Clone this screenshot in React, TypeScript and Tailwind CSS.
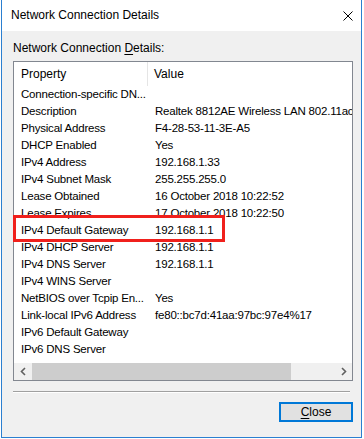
const rows: [string, string][] = [
  ["Connection-specific DN...", ""],
  ["Description", "Realtek 8812AE Wireless LAN 802.11ac"],
  ["Physical Address", "F4-28-53-11-3E-A5"],
  ["DHCP Enabled", "Yes"],
  ["IPv4 Address", "192.168.1.33"],
  ["IPv4 Subnet Mask", "255.255.255.0"],
  ["Lease Obtained", "16 October 2018 10:22:52"],
  ["Lease Expires", "17 October 2018 10:22:50"],
  ["IPv4 Default Gateway", "192.168.1.1"],
  ["IPv4 DHCP Server", "192.168.1.1"],
  ["IPv4 DNS Server", "192.168.1.1"],
  ["IPv4 WINS Server", ""],
  ["NetBIOS over Tcpip En...", "Yes"],
  ["Link-local IPv6 Address", "fe80::bc7d:41aa:97bc:97e4%17"],
  ["IPv6 Default Gateway", ""],
  ["IPv6 DNS Server", ""],
];

const Chevron = ({ dir }: { dir: "left" | "right" }) => (
  <svg width="6" height="9" viewBox="0 0 6 9">
    <polyline
      points={dir === "left" ? "5,1 1.5,4.5 5,8" : "1,1 4.5,4.5 1,8"}
      fill="none"
      stroke="#606060"
      strokeWidth="1.6"
    />
  </svg>
);

export default function App() {
  return (
    <div className="relative w-[364px] h-[439px] bg-white overflow-hidden font-['Liberation_Sans',Arial,sans-serif] text-[12px] text-black">
      <div className="ml-[1px] w-[361px] h-[438px] border-x border-b border-[#2b7fd0] flex flex-col">
        {/* title bar */}
        <div className="h-[31px] bg-white flex items-center justify-between pl-[9px] pr-[8px] shrink-0">
          <span className="leading-[15px]">Network Connection Details</span>
          <svg width="10" height="10" viewBox="0 0 10 10">
            <path d="M0.5 0.5 L9.5 9.5 M9.5 0.5 L0.5 9.5" stroke="#000" strokeWidth="1" />
          </svg>
        </div>

        <div className="flex-1 bg-[#f0f0f0] flex flex-col pl-[11px] pr-[8px]">
          <div className="mt-[10px] h-[15px] leading-[15px]">
            Network Connection <span className="underline underline-offset-2">D</span>etails:
          </div>

          <div className="mt-[5px] h-[320px] border border-[#828790] bg-white flex flex-col overflow-hidden">
            <div className="h-[24px] flex shrink-0">
              <div className="w-[134px] shrink-0 pl-[7px] flex items-center border-r border-[#e5e5e5]">Property</div>
              <div className="pl-[6px] flex items-center">Value</div>
            </div>
            {rows.map(([k, v]) => (
              <div key={k} className="h-[17px] flex items-center shrink-0 whitespace-nowrap text-[11.5px] tracking-[-0.2px]">
                <div className="w-[134px] shrink-0 pl-[7px]">{k}</div>
                <div className="pl-[7px]">{v}</div>
              </div>
            ))}
            <div className="flex-1" />
            <div className="h-[17px] flex bg-[#f0f0f0] shrink-0">
              <div className="w-[17px] flex items-center justify-center">
                <Chevron dir="left" />
              </div>
              <div className="ml-[1px] w-[259px] bg-[#cdcdcd]" />
              <div className="flex-1" />
              <div className="w-[17px] flex items-center justify-center">
                <Chevron dir="right" />
              </div>
            </div>
          </div>

          <div className="mt-[10px] w-[337px] h-px bg-[#a0a0a0]" />
          <div className="w-[337px] h-px bg-white" />

          <button className="mt-[9px] self-end w-[74px] h-[20px] border-2 border-[#0078d7] bg-[#e1e1e1] flex items-center justify-center leading-[14px]">
            <span>
              <span className="underline underline-offset-2">C</span>lose
            </span>
          </button>
        </div>
      </div>

      <div className="absolute left-[13px] top-[215px] w-[212px] h-[27px] border-[3px] border-[#f0201c]" />
    </div>
  );
}
